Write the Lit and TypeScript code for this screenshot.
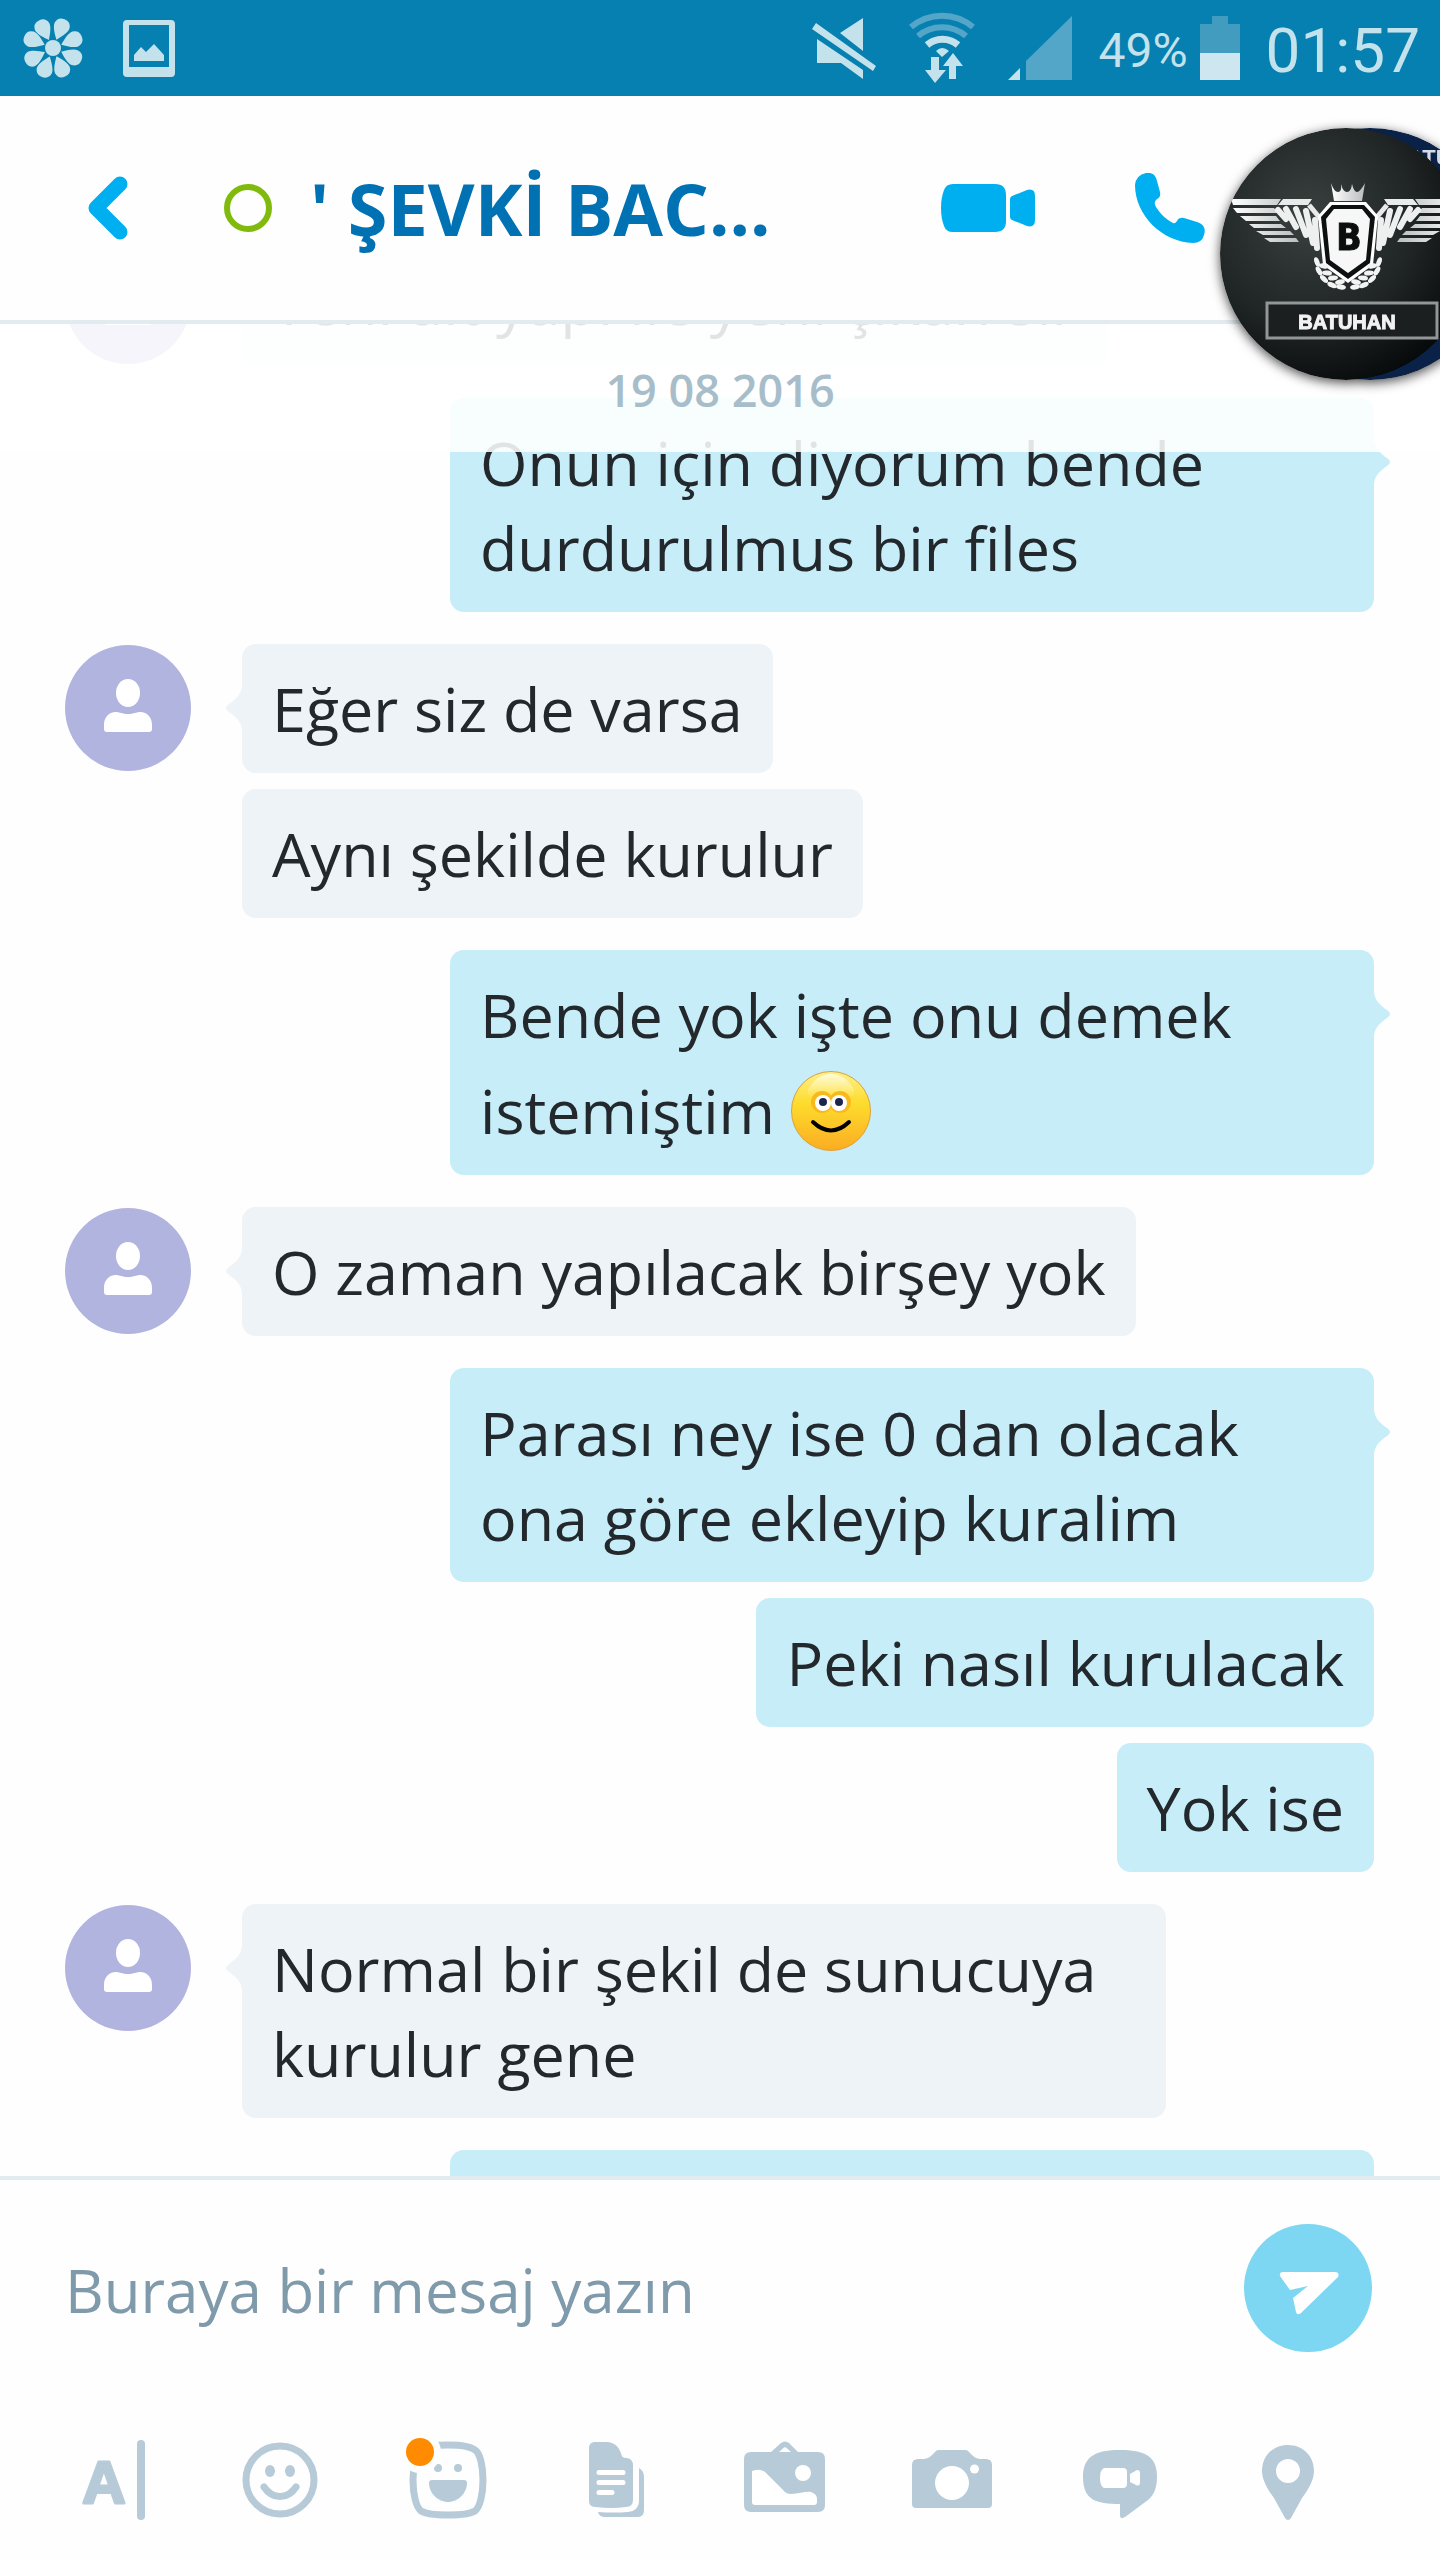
import { css, html, LitElement, svg } from "lit";
import { customElement, property } from "lit/decorators.js";

interface Message {
  text: string;
  emoji?: boolean;
}

interface Group {
  own: boolean;
  messages: Message[];
}

const GROUPS: Group[] = [
  { own: false, messages: [{ text: "Yeni alt yapı ile yeni çıkan sır" }] },
  { own: true, messages: [{ text: "Onun için diyorum bende durdurulmus bir files" }] },
  { own: false, messages: [{ text: "Eğer siz de varsa" }, { text: "Aynı şekilde kurulur" }] },
  { own: true, messages: [{ text: "Bende yok işte onu demek istemiştim", emoji: true }] },
  { own: false, messages: [{ text: "O zaman yapılacak birşey yok" }] },
  {
    own: true,
    messages: [
      { text: "Parası ney ise 0 dan olacak ona göre ekleyip kuralim" },
      { text: "Peki nasıl kurulacak" },
      { text: "Yok ise" },
    ],
  },
  { own: false, messages: [{ text: "Normal bir şekil de sunucuya kurulur gene" }] },
  { own: true, messages: [{ text: "" }] },
];

const PETALS = [22, 68, 114, 157, 201, 243, 292, 333];

const TOOLS = [
  {
    label: "Metin",
    icon: svg`
      <text class="letter" x="40" y="71" text-anchor="middle">A</text>
      <rect x="73" y="8" width="8" height="80" rx="4" />`,
  },
  {
    label: "İfadeler",
    icon: svg`
      <circle class="line" cx="48" cy="48" r="34" />
      <ellipse cx="38" cy="39" rx="5" ry="6" />
      <ellipse cx="58" cy="39" rx="5" ry="6" />
      <path class="line" stroke-linecap="round" d="M32 55C36 61 42 64.500 48 64.500S60 61 64 55" />`,
  },
  {
    label: "Mojiler",
    icon: svg`
      <mask id="dot-gap">
        <rect width="96" height="96" fill="#fff" />
        <circle cx="20" cy="20" r="21" fill="#000" />
      </mask>
      <g mask="url(#dot-gap)">
        <path class="line" d="M48 13C60 13 70 14 75 18C80 21 83 34 83 48S80 75 75 79C70 82 60 83 48 83S26 82 21 79C16 75 13 62 13 48S16 21 21 18C26 14 36 13 48 13Z" />
        <circle cx="38" cy="36" r="4" />
        <circle cx="58" cy="36" r="4" />
        <path d="M32 48H64Q67 48 67 51C67 61 58 70 48 70S29 61 29 51Q29 48 32 48Z" />
      </g>
      <circle class="dot" cx="20" cy="20" r="14" />`,
  },
  {
    label: "Dosya",
    icon: svg`
      <path d="M26 10H38C48 10 52 17 53.500 23Q54 26 58 26Q65 26 65 34V68Q65 75 58 75Q43 77 28 75Q21 75 21 69V16Q21 11 26 10Z" />
      <path class="paper" stroke-linecap="round" d="M31 40.500H55M31 50.500H55M31 60.500H44" />
      <path d="M71 36Q76 39 76 45V78Q76 85 70 85H37Q31 85 30 80Q46 81 60 80Q71 79 71 68Z" />`,
  },
  {
    label: "Fotoğraf",
    icon: svg`
      <path fill-rule="evenodd" d="M35 20L45 11Q49 8 53 11L62 20H82Q89 20 89 27V73Q89 80 82 80H15Q8 80 8 73V27Q8 20 15 20ZM43 20H55L50 15.500Q49 15 48 15.500Z" />
      <circle class="hole" cx="67" cy="41" r="8" />
      <path class="hole" d="M16 39Q24 36 29 40L47 58Q50 62 55 62C63 62 70 59 75 60Q81 62 81 67V70Q81 73 78 73H19Q16 73 16 70Z" />`,
  },
  {
    label: "Kamera",
    icon: svg`
      <path d="M14 27H20Q24 27 27 24L32 19Q33 18 35 18H61Q63 18 64 19L69 24Q72 27 76 27H82Q88 27 88 33V72Q88 76 84 76H12Q8 76 8 72V33Q8 27 14 27Z" />
      <circle class="hole" cx="48" cy="51" r="17" />
      <circle class="hole" cx="70.500" cy="37" r="4.500" />`,
  },
  {
    label: "Video mesajı",
    icon: svg`
      <path d="M48 18C72 18 85 24 85 44C85 56 82 63 76 68L53 85Q48 88 48 83V72C24 72 11 68 11 45C11 24 24 18 48 18Z" />
      <path class="hole" d="M32 36H51Q55 36 55 40V52Q55 56 51 56H32Q28 54 28 46T32 36ZM58 42L65 38Q68 38 68 41V51Q68 54 65 53.500L58 50Z" />`,
  },
  {
    label: "Konum",
    icon: svg`
      <path fill-rule="evenodd" d="M48 13C63 13 74 24 74 39C74 48 68 58 62 66L51 86Q48 90 45 86L34 66C28 58 22 48 22 39C22 24 33 13 48 13ZM48 27A12 12 0 1 0 48 51A12 12 0 1 0 48 27Z" />`,
  },
];

@customElement("message-group")
export class MessageGroup extends LitElement {
  @property({ attribute: false }) group!: Group;

  static styles = css`
    * { margin: 0; box-sizing: border-box }

    :host {
      display: flex;
      align-items: flex-start;
      color: #edf3f6;
      padding-right: 66px;
    }

    :host([own]) {
      justify-content: flex-end;
      padding-right: 50px;
      color: #c6edf8;
    }

    .avatar {
      width: 126px;
      height: 126px;
      margin: 1px 35px 0 65px;
      flex: none;
    }

    .tail {
      width: 16px;
      height: 44px;
      margin-top: 42px;
      flex: none;
    }

    :host([own]) .tail {
      transform: scaleX(-1);
    }

    .bubbles {
      display: flex;
      flex-direction: column;
      align-items: flex-start;
      gap: 16px;
      max-width: 924px;
    }

    :host([own]) .bubbles {
      align-items: flex-end;
    }

    .bubble {
      background: currentColor;
      border-radius: 14px;
      padding: 22px 30px;
      min-height: 129px;
      font-size: 61px;
      line-height: 85px;
    }

    .bubble:empty {
      width: 924px;
    }

    .text {
      color: #23282d;
    }

    .emoji {
      width: 80px;
      height: 80px;
      margin-top: 14px;
      vertical-align: -17px;
    }
  `;

  avatar() {
    return html`
      <svg class="avatar" viewBox="0 0 126 126" aria-hidden="true">
        <circle cx="63" cy="63" r="63" fill="#b2b4e0" />
        <ellipse cx="63" cy="48" rx="12" ry="14" fill="#fff" />
        <path fill="#fff" d="M39 84V80C39 74 42 68 50 67C55 67 57 69 63 69S71 67 76 67C84 68 87 74 87 80V84Q87 87 84 87H42Q39 87 39 84Z" />
      </svg>
    `;
  }

  tail() {
    return html`
      <svg class="tail" viewBox="0 0 16 44" aria-hidden="true">
        <path fill="currentColor" d="M16 0C15 9 10 13 3 18Q-3 22 3 26C10 31 15 35 16 44Z" />
      </svg>
    `;
  }

  emoji() {
    return html`
      <svg class="emoji" viewBox="0 0 80 80" role="img" aria-label="gülümseme">
        <defs>
          <linearGradient id="face" x1="0" y1="0" x2="0" y2="1">
            <stop offset="0" stop-color="#fdf08c" />
            <stop offset="0.400" stop-color="#fddc2c" />
            <stop offset="1" stop-color="#fbac22" />
          </linearGradient>
          <linearGradient id="shine" x1="0" y1="0" x2="0" y2="1">
            <stop offset="0" stop-color="#fffbd8" />
            <stop offset="1" stop-color="#fff3a0" stop-opacity="0" />
          </linearGradient>
        </defs>
        <circle cx="40" cy="40" r="39.500" fill="url(#face)" stroke="#dda03c" />
        <path d="M17 18Q26 3 40 3T63 18V22Q63 28 40 28T17 22Z" fill="url(#shine)" />
        <circle cx="31" cy="31" r="11" fill="#f9b91c" />
        <circle cx="49" cy="31" r="11" fill="#f9b91c" />
        <circle cx="32" cy="32" r="8" fill="#fff" />
        <circle cx="48" cy="32" r="8" fill="#fff" />
        <circle cx="32" cy="31" r="4" fill="#1c2450" />
        <circle cx="48" cy="31" r="4" fill="#1c2450" />
        <path d="M22 51Q40 68 58 51" fill="none" stroke="#000" stroke-width="4" stroke-linecap="round" />
      </svg>
    `;
  }

  bubble(message: Message) {
    if (!message.text) return html`<div class="bubble"></div>`;
    return html`<div class="bubble"><p class="text">${message.text} ${message.emoji ? this.emoji() : ""}</p></div>`;
  }

  render() {
    const { own, messages } = this.group;
    return html`
      ${own ? "" : html`${this.avatar()}${this.tail()}`}
      <div class="bubbles">${messages.map((message) => this.bubble(message))}</div>
      ${own ? this.tail() : ""}
    `;
  }
}

@customElement("status-bar")
export class StatusBar extends LitElement {
  static styles = css`
    :host {
      display: flex;
      align-items: center;
      justify-content: space-between;
      height: 96px;
      flex: none;
      padding: 0 20px 0 23px;
      box-sizing: border-box;
      background: #0580b1;
      color: #c3e2ec;
      font-family: Roboto, sans-serif;
    }

    div {
      display: flex;
      align-items: center;
    }

    span {
      padding-top: 4px;
    }

    svg {
      display: block;
      fill: currentColor;
    }

    .apps {
      gap: 40px;
    }

    .system {
      gap: 26px;
    }

    .signals {
      gap: 32px;
    }

    .battery {
      gap: 12px;
      font-size: 48px;
    }

    .time {
      font-size: 62px;
    }

    .dim {
      fill: #54a6c8;
    }

    .arc {
      fill: none;
      stroke: currentColor;
      stroke-width: 7;
    }

    .arc.faint {
      stroke: #54a6c8;
      stroke-width: 6;
    }
  `;

  render() {
    return html`
      <div class="apps">
        <svg width="60" height="62" viewBox="0 0 60 62" aria-hidden="true">
          ${PETALS.map((angle) => svg`<path transform="translate(30 31) rotate(${angle})" d="M0 -9C-3 -13 -8 -19 -8 -24Q-7 -31 0 -31T8 -24C8 -19 3 -13 0 -9Z" />`)}
          <circle cx="30" cy="31" r="8" />
        </svg>
        <svg width="52" height="57" viewBox="0 0 52 57" aria-hidden="true">
          <path fill-rule="evenodd" d="M4 0H48Q52 0 52 4V53Q52 57 48 57H4Q0 57 0 53V4Q0 0 4 0ZM6 5V47H46V5Z" />
          <path d="M11 35L18 27L23 32L31 24L41 35V41H11Z" />
        </svg>
      </div>
      <div class="system">
        <div class="signals">
          <svg width="64" height="64" viewBox="0 0 64 64" role="img" aria-label="Sessiz">
            <path d="M4 7L64 50L61 55L0 13ZM51 2V35L28 17ZM5 23L51 54V63L29 47H5Z" />
          </svg>
          <svg width="68" height="72" viewBox="2 0 68 72" role="img" aria-label="Wi-Fi">
            <path class="arc faint" d="M5 15A48 48 0 0 1 67 15M12 24A37 37 0 0 1 60 24" />
            <path class="arc" d="M21 33A24 24 0 0 1 52 33" />
            <path d="M30 39Q36 33 43 39L36 45ZM25 45H33V58H40L29 71L19 58H25ZM43 67V54H37L47 41L57 54H50V67Z" />
          </svg>
          <svg width="64" height="64" viewBox="0 0 64 64" role="img" aria-label="Sinyal">
            <path d="M0 64L12 52V64Z" />
            <path class="dim" d="M18 45L64 0V64H18Z" />
          </svg>
        </div>
        <div class="battery">
          <span>49%</span>
          <svg width="40" height="64" viewBox="0 0 40 64" aria-hidden="true">
            <path fill="#419cbf" d="M12 0H28V8H40V38H0V8H12Z" />
            <path fill="#cde6f0" d="M0 37H40V64H0Z" />
          </svg>
        </div>
        <span class="time">01:57</span>
      </div>
    `;
  }
}

@customElement("chat-head")
export class ChatHead extends LitElement {
  static styles = css`
    svg {
      display: block;
      overflow: visible;
      filter: drop-shadow(0 3px 6px rgba(0, 0, 0, .7));
    }

    .initial {
      font: bold 37px "DejaVu Sans Condensed", "DejaVu Sans", sans-serif;
      fill: #0c0e0e;
      stroke: #0c0e0e;
    }

    .name {
      font: bold 20px "Liberation Sans", sans-serif;
      fill: #f2f2f2;
      stroke: #f2f2f2;
    }

    .back-name {
      font: bold 22px "Liberation Sans", sans-serif;
      fill: #d6dbe6;
    }
  `;

  wing() {
    return svg`
      <path fill="url(#steel)" d="M11 71H61L57 77H13ZM13 80H54L58 85H17ZM20 88H56L60 93H26ZM29 96H61L66 100H34ZM36 103H70L74 107H43ZM44 110H76L79 114H50Z" />
      <path fill="#e9ebeb" d="M63 71H92L88 77H58Z" />
      <path stroke="#eef0f0" stroke-width="6" stroke-linecap="round" d="M58 82L66 91M66 81L76 99M76 81L86 107M86 83L93 115M95 92L97 120" />
      <path stroke="#e9ebeb" stroke-width="5" d="M89 77L104 95" />
    `;
  }

  laurel() {
    const leaves = [[97, 134, 70], [104, 138, 10], [99, 143, 60], [107, 145, 5], [104, 151, 45], [113, 150, -5], [112, 157, 25], [120, 154, -15], [121, 159, 10]];
    return leaves.map(([x, y, angle]) => svg`
      <ellipse transform="translate(${x} ${y}) rotate(${angle})" rx="5" ry="2.500" fill="#f2f4f4" />
    `);
  }

  render() {
    return html`
      <svg width="276" height="252" viewBox="0 0 276 252" role="img" aria-label="Batuhan">
        <defs>
          <radialGradient id="leather" cx="0.350" cy="0.350" r="0.700">
            <stop offset="0" stop-color="#39413f" />
            <stop offset="0.600" stop-color="#202525" />
            <stop offset="1" stop-color="#080b0c" />
          </radialGradient>
          <linearGradient id="steel">
            <stop offset="0" stop-color="#fff" />
            <stop offset="1" stop-color="#b9bdbd" />
          </linearGradient>
          <clipPath id="front"><circle cx="126" cy="126" r="126" /></clipPath>
          <clipPath id="back"><circle cx="150" cy="126" r="126" /></clipPath>
        </defs>
        <g clip-path="url(#back)">
          <circle cx="150" cy="126" r="126" fill="#0a2148" />
          <text class="back-name" x="188" y="37">ATU</text>
        </g>
        <g clip-path="url(#front)">
          <circle cx="126" cy="126" r="126" fill="url(#leather)" />
          ${this.wing()}
          <g transform="translate(256) scale(-1 1)">${this.wing()}</g>
          <path fill="url(#steel)" d="M111 55Q114 64 118 64T121 56Q123 64 127 64T132 56Q134 64 137 64T145 55L142 73H114Z" />
          <path fill="#fff" d="M110 74H146L158 88L153 137L128 155L103 137L98 88Z" />
          <path fill="#0d1010" d="M112 77H144L155 89L150 135L128 151L106 135L101 89Z" />
          <path fill="#f7f7f7" d="M114 81H142L150 91L146 132L128 145L110 132L106 91Z" />
          ${this.laurel()}
          <g transform="translate(256) scale(-1 1)">${this.laurel()}</g>
          <text class="initial" x="129" y="122" text-anchor="middle">B</text>
          <rect x="47" y="175" width="170" height="35" fill="#1b1f20" stroke="#929697" stroke-width="3" />
          <text class="name" x="127" y="201" text-anchor="middle">BATUHAN</text>
        </g>
      </svg>
    `;
  }
}

@customElement("app-root")
export class AppRoot extends LitElement {
  static styles = css`
    * { margin: 0; box-sizing: border-box }

    :host {
      display: flex;
      flex-direction: column;
      height: 100vh;
      position: relative;
      overflow: hidden;
      background: #fefefe;
      font-family: "Open Sans", "Noto Sans", sans-serif;
    }

    button {
      border: 0;
      padding: 0;
      background: none;
      color: inherit;
      cursor: pointer;
    }

    svg {
      display: block;
      fill: currentColor;
    }

    .header {
      display: flex;
      align-items: center;
      flex: none;
      height: 228px;
      padding: 0 235px 0 88px;
      border-bottom: 4px solid #e2ebf0;
      color: #00aff0;
    }

    .presence {
      width: 48px;
      height: 48px;
      margin: 0 38px 0 96px;
      border: 6px solid #7fba0c;
      border-radius: 50%;
    }

    .title {
      flex: 1;
      color: #0071b3;
      font-size: 72px;
      font-weight: 700;
      white-space: nowrap;
    }

    .calls {
      display: flex;
      align-items: center;
      gap: 100px;
    }

    .history {
      flex: 1;
      min-height: 0;
      overflow-y: auto;
      scrollbar-width: none;
      display: flex;
      flex-direction: column;
      gap: 32px;
    }

    .history > * {
      flex: none;
    }

    /* sticky day marker laid over the top of the scrolling list */
    .day {
      position: absolute;
      top: 324px;
      left: 0;
      right: 0;
      height: 128px;
      padding-top: 30px;
      background: rgba(255, 255, 255, .87);
      color: #a8bdca;
      font-size: 45px;
      font-weight: 600;
      line-height: 72px;
      text-align: center;
    }

    .head {
      position: absolute;
      top: 128px;
      right: -56px;
    }

    .composer {
      flex: none;
      border-top: 4px solid #e2ebf0;
      padding-top: 44px;
    }

    .entry {
      display: flex;
      align-items: center;
      padding: 0 68px 0 65px;
    }

    .entry input {
      flex: 1;
      min-width: 0;
      height: 128px;
      padding: 4px 0 0;
      border: 0;
      outline: 0;
      background: none;
      color: #23282d;
      font: inherit;
      font-size: 60px;
    }

    .entry input::placeholder {
      color: #7f9aaa;
      opacity: 1;
    }

    .send {
      border-radius: 50%;
      background: #7dd6f2;
      color: #fff;
    }

    .tools {
      display: flex;
      padding: 80px 68px 32px 28px;
      color: #b6cad8;
    }

    .tools button {
      flex: 1;
      display: flex;
      justify-content: center;
    }

    .letter {
      font-size: 60px;
      font-weight: 700;
      stroke: currentColor;
      stroke-width: 3;
      stroke-linejoin: round;
    }

    .line {
      fill: none;
      stroke: currentColor;
      stroke-width: 7;
    }

    .paper {
      fill: none;
      stroke: #fff;
      stroke-width: 5;
    }

    .hole {
      fill: #fff;
    }

    .dot {
      fill: #ff8c00;
    }
  `;

  async firstUpdated() {
    await Promise.all([...this.renderRoot.querySelectorAll<MessageGroup>("message-group")].map((el) => el.updateComplete));
    this.renderRoot.querySelector(".history")!.scrollTop = 87;
  }

  header() {
    return html`
      <header class="header">
        <button aria-label="Geri">
          <svg width="40" height="64" viewBox="0 0 40 64">
            <path fill="none" stroke="currentColor" stroke-width="15" stroke-linecap="round" stroke-linejoin="round" d="M32 8L8 32L32 56" />
          </svg>
        </button>
        <span class="presence"></span>
        <h1 class="title">' ŞEVKİ BAC...</h1>
        <div class="calls">
          <button aria-label="Görüntülü arama">
            <svg width="94" height="48" viewBox="0 0 94 48">
              <path d="M12 0H54Q65 0 65 11V37Q65 48 54 48H12Q5 48 3 42Q0 34 0 24T3 6Q5 0 12 0ZM69 15Q69 13 71 12L86 6Q94 4 94 12V36Q94 44 86 42L71 36Q69 35 69 33Z" />
            </svg>
          </button>
          <button aria-label="Sesli arama">
            <svg width="70" height="70" viewBox="0 0 70 70">
              <path d="M11 0C18 -1 21 3 22 8L25 19Q26 24 22 26Q18 29 21 34C26 42 31 46 38 50Q40 51 42 48Q44 44 49 45L62 49C69 51 71 56 69 62Q67 70 58 70C27 69 0 42 0 12Q1 2 11 0Z" />
            </svg>
          </button>
        </div>
      </header>
    `;
  }

  composer() {
    return html`
      <footer class="composer">
        <div class="entry">
          <input type="text" aria-label="Mesaj" placeholder="Buraya bir mesaj yazın" />
          <button class="send" aria-label="Gönder">
            <svg width="128" height="128" viewBox="0 0 128 128">
              <path d="M39 48H92Q96 49 94 53L57 89Q53 92 52 88L49 74L64 62L46 66L36 52Q35 48 39 48Z" />
            </svg>
          </button>
        </div>
        <div class="tools">
          ${TOOLS.map((tool) => html`
            <button aria-label=${tool.label}>
              <svg width="96" height="96" viewBox="0 0 96 96">${tool.icon}</svg>
            </button>
          `)}
        </div>
      </footer>
    `;
  }

  render() {
    return html`
      <status-bar></status-bar>
      ${this.header()}
      <main class="history">
        ${GROUPS.map((group) => html`<message-group ?own=${group.own} .group=${group}></message-group>`)}
      </main>
      <time class="day" datetime="2016-08-19">19 08 2016</time>
      ${this.composer()}
      <chat-head class="head"></chat-head>
    `;
  }
}
